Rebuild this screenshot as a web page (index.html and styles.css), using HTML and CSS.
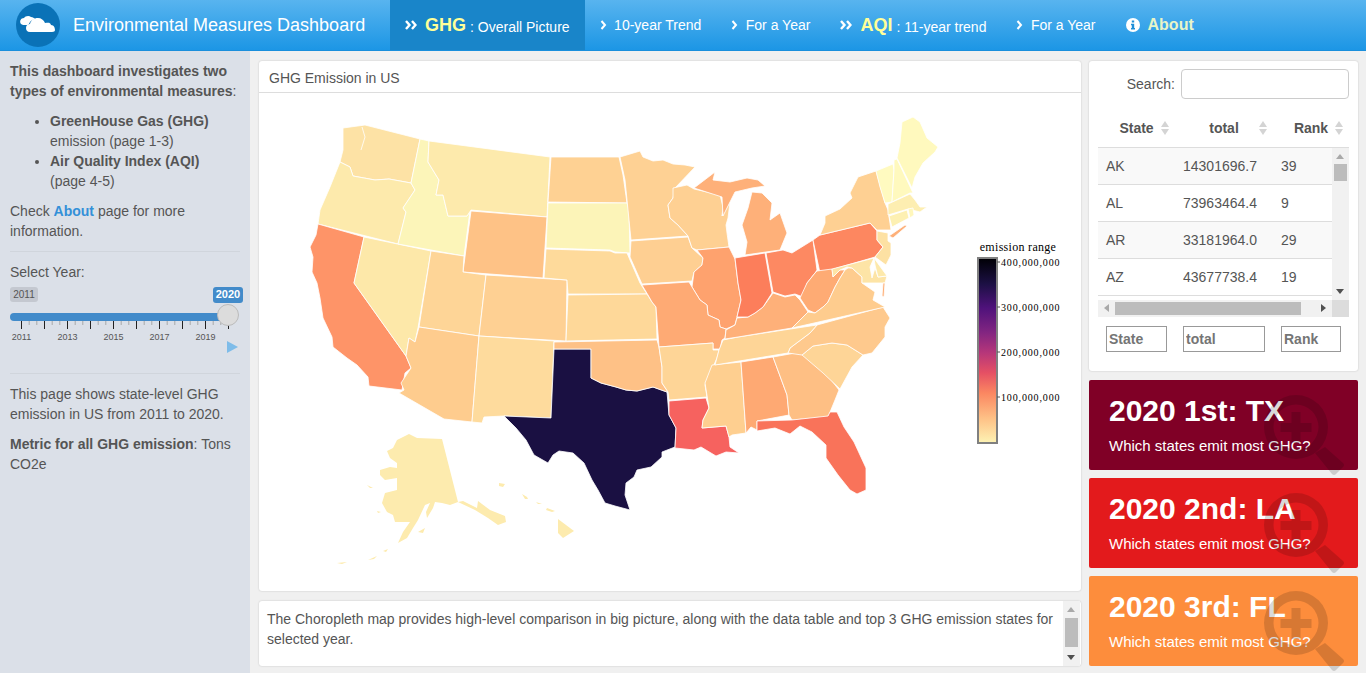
FILE: index.html
```html
<!DOCTYPE html>
<html lang="en">
<head>
    <meta charset="UTF-8">
    <meta name="viewport" content="width=device-width, initial-scale=1.0">
    <title>Environmental Measures Dashboard</title>
    <link rel="stylesheet" href="styles.css">
</head>
<body>
    <header class="topbar">
        <div class="brand">
            <svg class="brand-logo" width="44" height="44" viewBox="0 0 44 44">
                <circle cx="22" cy="22" r="22" fill="#0a72b7"/>
                <path fill="#fff" d="M5 21c-2-3 0-6 3-6 1-2 5-3 7-1 2 0 3 1 4 2-3 1-5 2-6 5-1 1-2 1-3 1-2 0-4 0-5-1z"/>
                <path fill="#fff" d="M14 29c-3 0-4-2-4-4 0-3 2-4 4-4 1-4 4-6 8-6 3 0 6 2 7 5 3 0 5-1 6 2 3 0 4 3 4 5 0 1-1 2-3 2z"/>
            </svg>
            <span class="brand-title">Environmental Measures Dashboard</span>
        </div>
        <nav class="nav">
            <a class="nav-item active">
                <svg class="chev double" width="12" height="10" viewBox="0 0 12 10"><path d="M1 1l3.500 4-3.500 4M7 1l3.500 4-3.500 4"/></svg>
                <b class="nav-big">GHG</b><span class="nav-low">: Overall Picture</span>
            </a>
            <a class="nav-item">
                <svg class="chev" width="7" height="10" viewBox="0 0 7 10"><path d="M1.500 1l3.500 4-3.500 4"/></svg>
                <span>10-year Trend</span>
            </a>
            <a class="nav-item">
                <svg class="chev" width="7" height="10" viewBox="0 0 7 10"><path d="M1.500 1l3.500 4-3.500 4"/></svg>
                <span>For a Year</span>
            </a>
            <a class="nav-item">
                <svg class="chev double" width="12" height="10" viewBox="0 0 12 10"><path d="M1 1l3.500 4-3.500 4M7 1l3.500 4-3.500 4"/></svg>
                <b class="nav-big">AQI</b><span class="nav-low">: 11-year trend</span>
            </a>
            <a class="nav-item">
                <svg class="chev" width="7" height="10" viewBox="0 0 7 10"><path d="M1.500 1l3.500 4-3.500 4"/></svg>
                <span>For a Year</span>
            </a>
            <a class="nav-item nav-about">
                <svg width="14" height="14" viewBox="0 0 14 14">
                    <circle cx="7" cy="7" r="7" fill="#fff"/>
                    <path fill="#1f8fd8" d="M5.800 2.500h2.400v2h-2.400zM5 5.800h3.200v4.200h.8v1.500H5V10h.8V7.300H5z"/>
                </svg>
                <b>About</b>
            </a>
        </nav>
    </header>

    <div class="page">
        <aside class="sidebar">
            <p><b>This dashboard investigates two types of environmental measures</b>:</p>
            <ul>
                <li><b>GreenHouse Gas (GHG)</b> emission (page 1-3)</li>
                <li><b>Air Quality Index (AQI)</b> (page 4-5)</li>
            </ul>
            <p>Check <b class="link">About</b> page for more information.</p>
            <hr>
            <div class="field-label">Select Year:</div>
            <div class="slider">
                <div class="slider-ends">
                    <span class="slider-min">2011</span>
                    <span class="slider-max">2020</span>
                </div>
                <div class="slider-bar"></div>
                <span class="slider-handle"></span>
                <svg class="slider-ticks" width="240" height="9" viewBox="0 0 240 9">
                    <path stroke="#a8a8a8" d="M19.200 0v4M26.800 0v4M42.200 0v4M49.800 0v4M65.200 0v4M72.800 0v4M88.200 0v4M95.800 0v4M111.200 0v4M118.800 0v4M134.200 0v4M141.800 0v4M157.200 0v4M164.800 0v4M180.200 0v4M187.800 0v4M203.200 0v4M210.800 0v4"/>
                    <path stroke="#222" d="M11.500 0v8M34.500 0v8M57.500 0v8M80.500 0v8M103.500 0v8M126.500 0v8M149.500 0v8M172.500 0v8M195.500 0v8M218.500 0v8"/>
                </svg>
                <div class="slider-labels">
                    <span>2011</span><span>2013</span><span>2015</span><span>2017</span><span>2019</span>
                </div>
                <span class="slider-play"></span>
            </div>
            <hr>
            <p>This page shows state-level GHG emission in US from 2011 to 2020.</p>
            <p><b>Metric for all GHG emission</b>: Tons CO2e</p>
        </aside>

        <main class="content">
            <div class="center-col">
                <section class="box map-box">
                    <div class="box-title">GHG Emission in US</div>
                    <svg class="map" width="822" height="498" viewBox="259 93 822 498">
                        <defs>
                            <linearGradient id="magma" x1="0" y1="0" x2="0" y2="1">
                                <stop offset="0" stop-color="#000004"/>
                                <stop offset=".14" stop-color="#1c1044"/>
                                <stop offset=".27" stop-color="#4f127b"/>
                                <stop offset=".4" stop-color="#812581"/>
                                <stop offset=".51" stop-color="#b5367a"/>
                                <stop offset=".62" stop-color="#e55064"/>
                                <stop offset=".73" stop-color="#fb8761"/>
                                <stop offset=".87" stop-color="#fec287"/>
                                <stop offset="1" stop-color="#fdf3b4"/>
                            </linearGradient>
                        </defs>
                        <g class="states">
                            <polygon fill="#fde2a5" points="343,128 365,125 420,139 411,183 389,179 375,180 353,176 350,167 340,162 343,150"/>
                            <polyline fill="none" points="362,127 365,137 361,150"/>
                            <polygon fill="#fdeaac" points="340,162 350,167 353,176 375,180 389,179 411,183 415,190 403,208 406,212 398,244 318,224 320,210 330,187"/>
                            <polygon fill="#fe9468" points="318,224 364,237 354,283 406,356 411,368 405,373 402,390 369,386 368,377 357,365 347,358 333,347 332,337 323,318 320,298 317,283 312,272 313,257 310,247 316,235"/>
                            <polygon fill="#fde8a9" points="364,237 431,251 418,328 415,342 409,338 406,356 354,283"/>
                            <polygon fill="#fcf5b9" points="420,139 429,141 428,162 439,180 436,195 443,195 448,216 467,216 470,211 464,256 398,244 406,212 403,208 415,190 411,183"/>
                            <polygon fill="#fdeaac" points="429,141 550,157 547,217 471,210 467,216 448,216 443,195 436,195 439,180 428,162"/>
                            <polygon fill="#fec286" points="471,211 547,217 543,278 463,272"/>
                            <polygon fill="#fed597" points="431,251 464,256 463,272 486,275 479,336 419,327"/>
                            <polygon fill="#fed093" points="486,275 567,280 566,341 479,336"/>
                            <polygon fill="#fecc8e" points="419,327 479,336 472,422 444,419 399,393 404,390 401,383 411,368 406,356 409,338 415,342"/>
                            <polygon fill="#fedb9d" points="479,336 554,341 551,418 504,416 484,417 482,423 472,422"/>
                            <polygon fill="#1a1042" points="554,349 591,349 591,378 601,383 616,387 626,390 637,391 653,387 667,392 669,415 676,428 675,447 662,452 662,457 651,467 637,470 634,477 626,483 625,495 630,510 615,506 605,503 598,490 592,480 584,463 573,453 559,451 553,455 548,463 534,455 526,440 516,428 504,416 551,418"/>
                            <polygon fill="#fed193" points="551,157 619,157 623,175 627,203 548,202"/>
                            <polygon fill="#fcf4b8" points="548,203 627,203 629,210 630,253 615,252 610,250 546,248"/>
                            <polygon fill="#feda9b" points="546,249 610,251 615,253 627,253 630,260 640,283 647,294 568,294 567,280 544,278"/>
                            <polygon fill="#fed899" points="568,295 647,294 652,302 656,307 657,339 566,341"/>
                            <polygon fill="#fec186" points="554,342 657,340 659,347 662,367 662,383 668,392 667,392 653,387 637,391 626,390 616,387 601,383 591,378 591,349 554,349"/>
                            <polygon fill="#fed194" points="620,157 640,151 643,157 653,161 663,160 673,164 685,165 695,167 675,188 673,198 668,205 670,218 678,225 688,236 631,240 628,210 625,180"/>
                            <polygon fill="#fecf92" points="631,241 688,237 692,248 703,258 702,265 694,272 692,281 642,284 630,257"/>
                            <polygon fill="#fed093" points="673,188 687,185 694,189 720,195 723,207 722,216 730,202 728,218 726,225 727,233 729,247 697,250 692,248 688,236 678,225 670,218 668,205 673,198"/>
                            <polygon fill="#fea26e" points="697,250 729,247 735,259 738,283 741,300 737,317 735,325 726,329 720,327 719,320 708,315 707,305 700,300 692,287 694,272 702,265 703,258"/>
                            <polygon fill="#feaa74" points="642,285 689,282 692,287 700,300 707,305 708,315 719,320 720,327 726,329 725,338 722,340 720,349 713,349 713,343 659,347 656,307 652,302 648,295"/>
                            <polygon fill="#fed597" points="659,347 713,343 713,350 719,350 717,358 713,367 708,377 705,385 707,397 669,400 668,392 662,383 662,367"/>
                            <polygon fill="#f6625f" points="669,401 706,398 709,408 703,420 702,428 726,426 729,437 730,447 739,453 726,452 716,456 701,447 694,450 675,448 676,428 669,415"/>
                            <polygon fill="#fecf90" points="712,365 741,362 746,433 732,435 729,437 726,426 702,428 703,420 709,408 705,383"/>
                            <polygon fill="#fea973" points="741,362 773,357 787,395 789,415 757,421 757,430 751,427 746,433"/>
                            <polygon fill="#febf84" points="773,357 801,352 803,355 825,372 839,390 835,400 828,417 792,420 789,415 787,395"/>
                            <polygon fill="#f9735a" points="757,421 792,420 828,416 830,412 837,412 844,427 854,442 866,468 866,490 857,494 850,490 838,475 826,458 826,445 812,432 800,426 790,434 775,428 757,431"/>
                            <polygon fill="#fed597" points="802,355 813,346 832,343 847,345 863,355 852,367 840,389 823,373"/>
                            <polygon fill="#fec98d" points="817,325 883,307 890,318 885,327 885,337 872,353 863,355 847,345 832,343 813,346 802,355 788,353 790,348 810,333"/>
                            <polygon fill="#fed597" points="738,337 817,325 810,333 790,348 788,353 715,365 719,350 723,340"/>
                            <polygon fill="#feb079" points="725,339 738,337 792,328 808,312 800,300 795,295 785,297 773,293 763,307 755,313 748,317 737,318 735,325 726,330"/>
                            <polygon fill="#fc7e5b" points="735,258 765,253 772,293 763,307 755,313 748,317 737,317 741,300 738,283"/>
                            <polygon fill="#fd8962" points="766,253 783,250 792,253 813,240 817,270 815,273 807,283 803,297 795,294 785,296 773,292"/>
                            <polygon fill="#fd8760" points="820,235 870,223 877,231 877,240 883,247 875,257 820,273 813,240"/>
                            <polygon fill="#feab74" points="817,271 832,269 833,277 840,270 845,270 840,278 835,287 828,302 823,307 815,313 808,310 800,298 807,283 815,273"/>
                            <polygon fill="#fecc8e" points="792,328 808,312 815,313 823,307 828,302 835,287 840,278 845,270 848,268 852,268 862,277 862,283 875,292 873,300 885,307"/>
                            <polygon fill="#fde4a6" points="832,269 874,258 870,267 872,278 875,268 878,277 887,276 885,283 873,283 862,283 862,277 852,268 847,267 840,270 833,277"/>
                            <polygon fill="#fde9ab" points="874,258 887,276 878,277 875,265"/>
                            <polygon fill="#feb079" points="883,283 885,283 884,297 882,296"/>
                            <polygon fill="#fde1a3" points="877,231 888,233 888,241 891,243 891,255 886,265 875,257 883,247 877,240"/>
                            <polygon fill="#fed093" points="820,235 825,223 825,216 840,209 852,198 850,193 858,177 876,171 885,203 888,210 891,230 877,230 870,223"/>
                            <polygon fill="#feb079" points="889,236 905,225 907,226 893,238"/>
                            <polygon fill="#fffac0" points="876,171 893,164 894,170 892,202 885,203 880,187"/>
                            <polygon fill="#fff9be" points="894,160 897,159 913,193 910,193 892,202 894,170"/>
                            <polygon fill="#fff9be" points="902,122 913,117 920,122 927,138 938,147 935,152 923,163 915,177 912,188 897,158 900,143"/>
                            <polygon fill="#fdeeb1" points="888,204 910,194 915,200 920,207 927,207 920,212 908,209 888,215"/>
                            <polygon fill="#fdf0b2" points="889,216 907,210 909,218 892,227"/>
                            <polygon fill="#fff7bc" points="908,209 913,208 914,215 910,218"/>
                            <polygon fill="#feb079" points="742,225 748,208 752,192 762,193 772,203 770,220 780,213 787,233 780,250 745,255 747,242"/>
                            <polygon fill="#feb079" points="694,188 715,172 713,180 730,182 747,178 758,180 765,186 752,188 735,192 723,216 722,197"/>
                        </g>
                        <g class="outliers">
                            <polygon points="409,434 417,438 442,439 458,502 450,505 442,503 435,502 433,508 427,518 426,512 430,503 425,505 418,520 413,528 407,538 398,543 403,532 410,522 395,522 393,515 387,512 382,503 385,493 397,490 397,478 385,480 380,475 380,470 390,467 397,468 397,463 390,458 387,451 393,448 397,440"/>
                            <polygon points="458,502 463,501 477,508 478,501 490,510 505,516 506,522 498,525 488,518 475,510"/>
                            <polygon points="383,551 388,549 386,552"/>
                            <polygon points="368,560 377,556 374,559"/>
                            <polygon points="337,563 347,562 342,564"/>
                            <polygon points="418,532 425,528 423,533"/>
                            <polygon points="377,511 381,512 378,513"/>
                            <polygon points="367,485 373,488 370,488"/>
                            <polygon points="558,519 574,531 563,538 558,533"/>
                            <polygon points="547,508 555,511 552,512 546,510"/>
                            <polygon points="536,502 542,504 538,504"/>
                            <polygon points="522,494 527,497 528,499 525,499"/>
                            <polygon points="499,483 505,484 503,487 499,486"/>
                        </g>
                        <rect x="978" y="258" width="19" height="185" fill="url(#magma)" stroke="#808080" stroke-width="2"/>
                        <path stroke="#555" d="M997 262h3M997 307h3M997 352h3M997 397h3"/>
                        <text class="legend-title" x="1018" y="251" text-anchor="middle">emission range</text>
                        <text class="legend-tick" x="1001" y="266">400,000,000</text>
                        <text class="legend-tick" x="1001" y="311">300,000,000</text>
                        <text class="legend-tick" x="1001" y="356">200,000,000</text>
                        <text class="legend-tick" x="1001" y="401">100,000,000</text>
                    </svg>
                </section>
                <section class="box note-box">
                    <p>The Choropleth map provides high-level comparison in big picture, along with the data table and top 3 GHG emission states for selected year.</p>
                    <div class="vbar note-bar">
                        <span class="arrow-up"></span>
                        <span class="vbar-thumb"></span>
                        <span class="arrow-down"></span>
                    </div>
                </section>
            </div>

            <div class="right-col">
                <section class="box table-box">
                    <label class="search">Search: <input type="text"></label>
                    <div class="table-head">
                        <span class="th">State<i class="sort"></i></span>
                        <span class="th">total<i class="sort"></i></span>
                        <span class="th">Rank<i class="sort"></i></span>
                    </div>
                    <div class="table-body">
                        <div class="rows">
                            <div class="row"><span>AK</span><span>14301696.7</span><span>39</span></div>
                            <div class="row"><span>AL</span><span>73963464.4</span><span>9</span></div>
                            <div class="row"><span>AR</span><span>33181964.0</span><span>29</span></div>
                            <div class="row"><span>AZ</span><span>43677738.4</span><span>19</span></div>
                        </div>
                        <div class="vbar table-vbar">
                            <span class="arrow-up"></span>
                            <span class="vbar-thumb"></span>
                            <span class="arrow-down"></span>
                        </div>
                    </div>
                    <div class="hbar">
                        <span class="arrow-left"></span>
                        <span class="hbar-thumb"></span>
                        <span class="arrow-right"></span>
                        <span class="hbar-corner"></span>
                    </div>
                    <div class="table-filters">
                        <input class="filter-state" type="text" placeholder="State">
                        <input class="filter-total" type="text" placeholder="total">
                        <input class="filter-rank" type="text" placeholder="Rank">
                    </div>
                </section>

                <div class="value-box first">
                    <h3>2020 1st: TX</h3>
                    <p>Which states emit most GHG?</p>
                    <svg class="value-icon" width="84" height="84" viewBox="0 0 84 84"><use href="#zoom-plus"/></svg>
                </div>
                <div class="value-box second">
                    <h3>2020 2nd: LA</h3>
                    <p>Which states emit most GHG?</p>
                    <svg class="value-icon" width="84" height="84" viewBox="0 0 84 84"><use href="#zoom-plus"/></svg>
                </div>
                <div class="value-box third">
                    <h3>2020 3rd: FL</h3>
                    <p>Which states emit most GHG?</p>
                    <svg class="value-icon" width="84" height="84" viewBox="0 0 84 84"><use href="#zoom-plus"/></svg>
                </div>
            </div>
        </main>
    </div>

    <svg class="sprites" width="0" height="0">
        <symbol id="zoom-plus" viewBox="0 0 84 84">
            <path fill-rule="evenodd" d="M33 1a32 32 0 1 0 0 64 32 32 0 0 0 0-64zm0 9.500a22.500 22.500 0 1 1 0 45 22.500 22.500 0 0 1 0-45z"/>
            <path d="M28.500 18h9v11h11v9h-11v11h-9V38h-11v-9h11z"/>
            <path d="M52 59l10-6 18 16q2 2 0 4l-7 7q-2 2-4 0z"/>
        </symbol>
    </svg>
</body>
</html>
```

FILE: styles.css
```css
* {
    box-sizing: border-box;
}
html, body {
    margin: 0;
    height: 673px;
    overflow: hidden;
}
body {
    font-family: "Liberation Sans", Arial, sans-serif;
    font-size: 14px;
    line-height: 20px;
    color: #555;
    background: #f0f0f0;
}
p {
    margin: 0 0 10px;
}

/* top bar */
.topbar {
    display: flex;
    height: 51px;
    background: linear-gradient(#58b4ef, #1c96e5);
    border-bottom: 1px solid #1a8fdc;
    color: #fff;
}
.brand {
    display: flex;
    align-items: center;
    width: 390px;
    padding-left: 16px;
}
.brand-logo {
    margin-right: 13px;
}
.brand-title {
    font-size: 18px;
}
.nav {
    display: flex;
}
.nav-item {
    display: flex;
    align-items: center;
    padding: 0 15px;
    white-space: nowrap;
}
.nav-item.active {
    background: #1985c9;
}
.chev {
    margin-right: 7.500px;
    fill: none;
    stroke: #fff;
    stroke-width: 2;
}
.chev.double {
    margin-right: 8px;
    stroke-width: 2.400;
}
.nav-big {
    font-size: 18px;
    color: #ffff99;
    margin-right: 4px;
}
.nav-low {
    padding-top: 3px;
}
.nav-about b {
    font-size: 16px;
    color: #e8f5c8;
    margin-left: 8px;
}

/* page */
.page {
    display: flex;
    height: 622px;
}
.sidebar {
    width: 250px;
    flex: none;
    padding: 10px;
    background: #dbe0e8;
}
.sidebar ul {
    margin: 10px 0;
    padding: 0 5px 0 40px;
}
.sidebar hr {
    margin: 10px 0;
    height: 1px;
    border: 0;
    background: #d0d5dc;
}
.link {
    color: #3390d8;
}
.slider {
    position: relative;
    height: 81px;
}
.slider-ends {
    display: flex;
    justify-content: space-between;
    align-items: flex-start;
    width: 233px;
    padding-top: 5px;
    font-size: 10px;
    line-height: 15px;
    text-align: center;
}
.slider-min {
    width: 28px;
    background: #c4c8d0;
    border-radius: 3px;
}
.slider-max {
    width: 30px;
    height: 16px;
    background: #428bca;
    color: #fff;
    font-size: 11px;
    font-weight: bold;
    border-radius: 3px;
}
.slider-bar {
    width: 218px;
    height: 8px;
    margin-top: 10px;
    background: #428bca;
    border-radius: 4px;
}
.slider-handle {
    position: absolute;
    left: 207px;
    top: 22px;
    width: 22px;
    height: 22px;
    background: #dcdcdc;
    border: 1px solid #bbb;
    border-radius: 50%;
}
.slider-ticks {
    display: block;
}
.slider-labels {
    display: flex;
    margin: 1px 0 0 -11.500px;
    font-size: 9px;
    line-height: 12px;
}
.slider-labels span {
    width: 46px;
    text-align: center;
}
.slider-play {
    position: absolute;
    left: 217px;
    top: 59px;
    border-left: 11px solid #7ebce9;
    border-top: 6.500px solid transparent;
    border-bottom: 6.500px solid transparent;
}

/* content */
.content {
    display: flex;
    gap: 8px;
    padding: 10px 8px 0 9px;
}
.center-col {
    display: flex;
    flex-direction: column;
    gap: 10px;
    width: 822px;
}
.right-col {
    width: 269px;
}
.box {
    background: #fff;
    border-radius: 3px;
    box-shadow: 0 0 2px rgba(0, 0, 0, 0.2);
}
.map-box {
    height: 530px;
}
.box-title {
    height: 32px;
    padding: 7px 10px 0;
    border-bottom: 1px solid #ddd;
    color: #555;
}
.map {
    display: block;
}
.states polygon, .states polyline {
    stroke: #fff;
    stroke-width: 0.800;
    stroke-linejoin: round;
}
.outliers {
    fill: #fdebae;
}
.legend-title {
    font-family: "Liberation Serif", serif;
    font-size: 12px;
    letter-spacing: 0.300px;
    fill: #000;
}
.legend-tick {
    font-family: "Liberation Serif", serif;
    font-size: 10px;
    letter-spacing: 0.850px;
    fill: #000;
}
.note-box {
    position: relative;
    height: 65px;
    padding: 8px 8px 0;
}
.note-box p {
    width: 790px;
}

/* fake scrollbars, the table is only a picture of its first rows */
.vbar {
    position: relative;
    width: 17px;
    background: #f1f1f1;
}
.note-bar {
    position: absolute;
    right: 1px;
    top: 0;
    height: 65px;
}
.table-vbar {
    flex: none;
    height: 152px;
}
.vbar-thumb {
    position: absolute;
    left: 2px;
    width: 13px;
    background: #bcbcbc;
}
.note-bar .vbar-thumb {
    top: 17px;
    height: 29px;
}
.table-vbar .vbar-thumb {
    top: 16px;
    height: 17px;
}
.arrow-up, .arrow-down {
    position: absolute;
    left: 4px;
    border-left: 4.500px solid transparent;
    border-right: 4.500px solid transparent;
}
.arrow-up {
    top: 6px;
    border-bottom: 5px solid #a9a9a9;
}
.arrow-down {
    bottom: 6px;
    border-top: 5px solid #505050;
}
.table-box {
    height: 310px;
    padding: 8px 9px 0;
}
.search {
    display: flex;
    align-items: center;
    justify-content: flex-end;
    gap: 6px;
    height: 30px;
}
.search input {
    width: 168px;
    height: 30px;
    border: 1px solid #ccc;
    border-radius: 4px;
    background: #fff;
}
.table-head {
    display: grid;
    grid-template-columns: 77px 98px 76px;
    height: 49px;
    padding-top: 19px;
    border-bottom: 1px solid #ddd;
    font-weight: bold;
}
.th {
    position: relative;
    text-align: center;
}
.sort {
    position: absolute;
    right: 5px;
    top: 3px;
    width: 9px;
    height: 14px;
}
.sort::before, .sort::after {
    content: "";
    position: absolute;
    left: 0;
    border-left: 4.500px solid transparent;
    border-right: 4.500px solid transparent;
}
.sort::before {
    top: 0;
    border-bottom: 6px solid #d4d4d4;
}
.sort::after {
    bottom: 0;
    border-top: 6px solid #d4d4d4;
}
.table-body {
    display: flex;
    height: 152px;
    overflow: hidden;
}
.rows {
    width: 234px;
}
.row {
    display: grid;
    grid-template-columns: 77px 98px 59px;
    height: 37px;
    padding-top: 8px;
    border-bottom: 1px solid #ddd;
}
.row:nth-child(odd) {
    background: #f9f9f9;
}
.row span {
    padding-left: 8px;
}
.hbar {
    position: relative;
    height: 17px;
    background: #f1f1f1;
}
.hbar-thumb {
    position: absolute;
    left: 17px;
    top: 2px;
    width: 186px;
    height: 13px;
    background: #bcbcbc;
}
.hbar-corner {
    position: absolute;
    right: 0;
    top: 0;
    width: 17px;
    height: 17px;
    background: #dcdcdc;
}
.arrow-left, .arrow-right {
    position: absolute;
    top: 4px;
    border-top: 4.500px solid transparent;
    border-bottom: 4.500px solid transparent;
}
.arrow-left {
    left: 6px;
    border-right: 5px solid #a9a9a9;
}
.arrow-right {
    left: 223px;
    border-left: 5px solid #505050;
}
.table-filters {
    display: flex;
    padding: 9px 0 0 8px;
}
.table-filters input {
    height: 26px;
    padding: 0 2px;
    border: 1px solid #999;
    background: #fff;
    font: bold 14px "Liberation Sans", Arial, sans-serif;
}
.filter-state {
    width: 61px;
    margin-right: 16px;
}
.filter-total {
    width: 82px;
    margin-right: 16px;
}
.filter-rank {
    width: 60px;
}

/* value boxes */
.value-box {
    position: relative;
    height: 90px;
    margin-top: 8px;
    padding: 14px 20px 0;
    border-radius: 2px;
    color: #fff;
}
.value-box.first {
    margin-top: 9px;
    background: #800026;
}
.value-box.second {
    background: #e31a1c;
}
.value-box.third {
    background: #fd8d3c;
}
.value-box h3 {
    margin: 0 0 9px;
    font-size: 30px;
    line-height: 33px;
}
.value-box p {
    margin: 0;
    font-size: 15px;
}
.value-icon {
    position: absolute;
    left: 174px;
    top: 14px;
    fill: rgba(0, 0, 0, 0.15);
}
.sprites {
    position: absolute;
}
```
